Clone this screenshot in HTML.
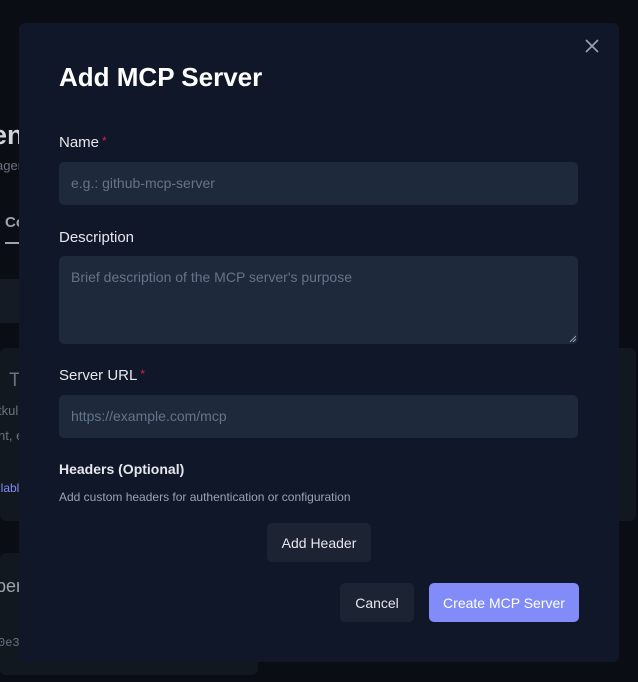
<!DOCTYPE html>
<html><head><style>
*{box-sizing:border-box;margin:0;padding:0}
body{width:638px;height:682px;background:#0a0d13;font-family:"Liberation Sans",sans-serif;position:relative;overflow:hidden}
.bg{position:absolute;color:#6b7280}
.m{position:absolute;left:19px;top:23px;width:600px;height:639px;background:#0f1729;border-radius:6px}
.t{position:absolute;left:40px;top:39px;font-size:26px;font-weight:bold;color:#fff}
.l{position:absolute;left:40px;font-size:15px;color:#e5e7eb}
.l b{color:#e11d48;font-weight:normal;font-size:12px;vertical-align:top;margin-left:3px}
.i{position:absolute;left:40px;width:519px;background:#1e293b;border-radius:5px;color:#64748b;font-size:14px;padding:0 12px}
.btn{position:absolute;border-radius:5px;font-size:14px;color:#e5e7eb;display:flex;align-items:center;justify-content:center}
</style></head><body>
<div class="bg" style="left:-8px;top:120px;font-size:27px;font-weight:bold;color:#d1d5db">en</div>
<div class="bg" style="left:-4px;top:158px;font-size:13px">ager</div>
<div class="bg" style="left:5px;top:214px;font-size:15px;font-weight:bold;color:#9ca3af">Co</div>
<div style="position:absolute;left:5px;top:242px;width:14px;height:2px;background:#9ca3af"></div>
<div style="position:absolute;left:0;top:279px;width:30px;height:44px;background:#151b25"></div>
<div style="position:absolute;left:0;top:348px;width:636px;height:173px;background:#111820;border-radius:6px"></div>
<div class="bg" style="left:9px;top:370px;font-size:19px">T</div>
<div class="bg" style="left:-2px;top:403px;font-size:13px">tkul</div>
<div class="bg" style="left:-2px;top:428px;font-size:13px">nt, e</div>
<div class="bg" style="left:-2px;top:481px;font-size:12px;color:#818cf8">ilabl</div>
<div style="position:absolute;left:0;top:553px;width:258px;height:122px;background:#111820;border-radius:6px"></div>
<div class="bg" style="left:-4px;top:576px;font-size:18px;color:#9ca3af">per</div>
<div class="bg" style="left:-2px;top:636px;font-size:12px;font-family:'Liberation Mono',monospace">0e3</div>
<div class="m">
<svg style="position:absolute;left:566px;top:16px" width="14" height="14" viewBox="0 0 14 14"><path d="M1 1L13 13M13 1L1 13" stroke="#9ca3af" stroke-width="1.6"/></svg>
<div class="t">Add MCP Server</div>
<div class="l" style="top:111px">Name<b>*</b></div>
<div class="i" style="top:139px;height:43px;line-height:43px">e.g.: github-mcp-server</div>
<div class="l" style="top:206px">Description</div>
<div class="i" style="top:233px;height:88px;padding-top:13px">Brief description of the MCP server's purpose
<svg style="position:absolute;right:2px;bottom:2px" width="7" height="7"><path d="M7 1L1 7M7 4L4 7" stroke="#94a3b8" stroke-width="1"/></svg></div>
<div class="l" style="top:344px">Server URL<b>*</b></div>
<div class="i" style="top:372px;height:43px;line-height:43px">https://example.com/mcp</div>
<div class="l" style="top:438px;font-weight:bold;font-size:14px">Headers (Optional)</div>
<div class="l" style="top:467px;font-size:12px;color:#9ca3af">Add custom headers for authentication or configuration</div>
<div class="btn" style="left:248px;top:500px;width:104px;height:39px;background:#1c2333">Add Header</div>
<div class="btn" style="left:321px;top:560px;width:74px;height:39px;background:#1c2333">Cancel</div>
<div class="btn" style="left:410px;top:560px;width:150px;height:39px;background:#818cf8;color:#fff">Create MCP Server</div>
</div>
</body></html>
